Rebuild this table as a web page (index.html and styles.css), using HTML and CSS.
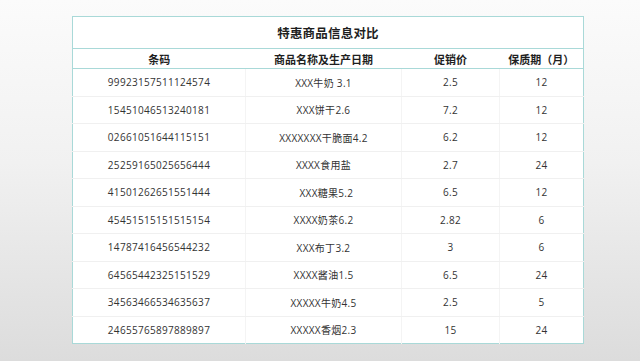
FILE: index.html
```html
<!DOCTYPE html>
<html lang="zh">
<head>
<meta charset="utf-8">
<link rel="stylesheet" href="styles.css">
</head>
<body>
<div class="page">
<table class="sheet">
  <colgroup>
    <col class="c1"><col class="c2"><col class="c3"><col class="c4">
  </colgroup>
  <thead>
    <tr class="title-row"><th colspan="4">特惠商品信息对比</th></tr>
    <tr class="head-row"><th>条码</th><th>商品名称及生产日期</th><th>促销价</th><th>保质期（月）</th></tr>
  </thead>
  <tbody>
    <tr><td>99923157511124574</td><td>XXX牛奶 3.1</td><td>2.5</td><td>12</td></tr>
    <tr><td>15451046513240181</td><td>XXX饼干2.6</td><td>7.2</td><td>12</td></tr>
    <tr><td>02661051644115151</td><td>XXXXXXX干脆面4.2</td><td>6.2</td><td>12</td></tr>
    <tr><td>25259165025656444</td><td>XXXX食用盐</td><td>2.7</td><td>24</td></tr>
    <tr><td>41501262651551444</td><td>&nbsp;&nbsp;XXX糖果5.2</td><td>6.5</td><td>12</td></tr>
    <tr><td>45451515151515154</td><td>XXXX奶茶6.2</td><td>2.82</td><td>6</td></tr>
    <tr><td>14787416456544232</td><td>XXX布丁3.2</td><td>3</td><td>6</td></tr>
    <tr><td>64565442325151529</td><td>XXXX酱油1.5</td><td>6.5</td><td>24</td></tr>
    <tr><td>34563466534635637</td><td>XXXXX牛奶4.5</td><td>2.5</td><td>5</td></tr>
    <tr><td>24655765897889897</td><td>XXXXX香烟2.3</td><td>15</td><td>24</td></tr>
  </tbody>
</table>
</div>
</body>
</html>
```
FILE: styles.css
```css
html, body {
  margin: 0;
  padding: 0;
  width: 640px;
  height: 361px;
  overflow: hidden;
}
body {
  background: linear-gradient(180deg, #fbfbfb 0%, #f1f1f1 45%, #dcdcdc 100%);
  font-family: "Open Sans", "Noto Sans CJK SC", sans-serif;
  color: #2a2a2a;
}
.page {
  padding: 16px 0 0 72px;
}
.sheet {
  width: 511px;
  border-collapse: collapse;
  background: #ffffff;
  border: 1px solid #a9d9d8;
  table-layout: fixed;
}
.c1 { width: 173px; }
.c2 { width: 156px; }
.c3 { width: 98px; }
.c4 { width: 84px; }
.sheet th, .sheet td {
  padding: 0;
  text-align: center;
  white-space: pre;
}
.title-row th {
  height: 31px;
  font-family: "Noto Sans CJK SC", sans-serif;
  font-size: 12.5px;
  font-weight: 700;
  letter-spacing: 0.2px;
  color: #1f1f1f;
  border-bottom: 1px solid #a9d9d8;
}
.head-row th {
  height: 19px;
  font-family: "Noto Sans CJK SC", sans-serif;
  font-size: 11px;
  font-weight: 700;
  color: #1f1f1f;
  border-bottom: 1px solid #a9d9d8;
}
.sheet td {
  height: 26.5px;
  font-size: 10px;
  letter-spacing: 0.3px;
  color: #333333;
  border-bottom: 1px solid #f0f0f0;
  border-right: 1px solid #f4f4f4;
}
.sheet td:last-child { border-right: none; }
.sheet tbody tr:last-child td { border-bottom: none; }
```
